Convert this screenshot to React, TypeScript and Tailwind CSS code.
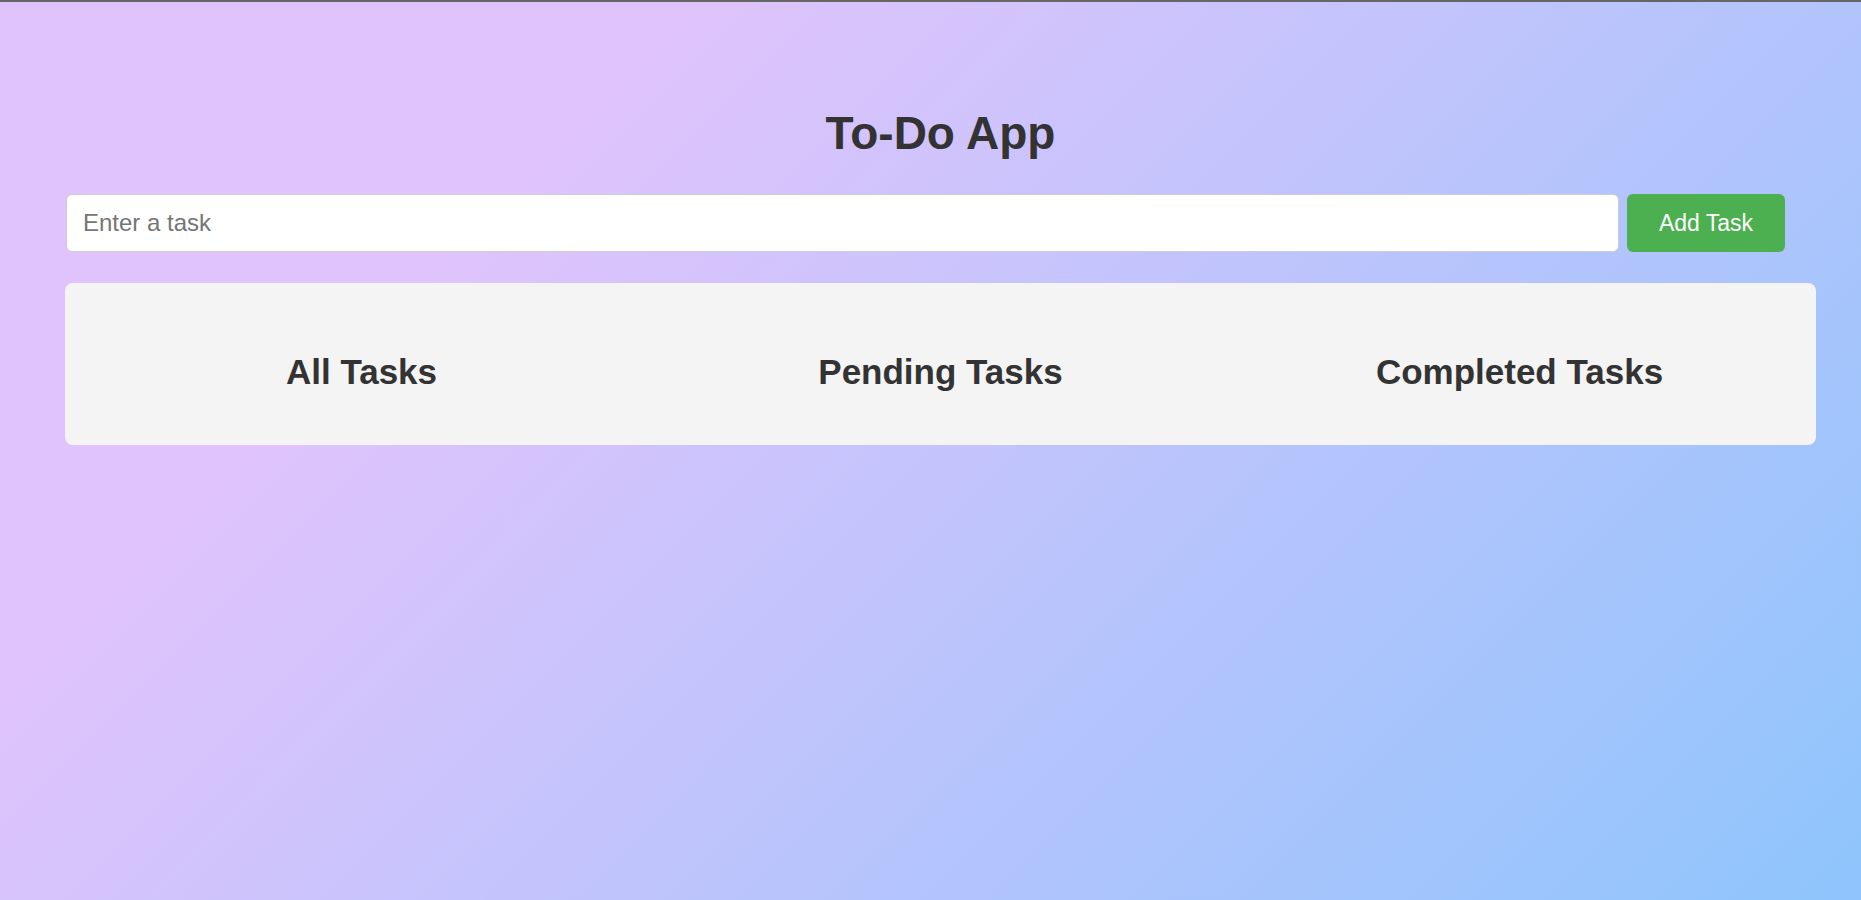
export default function App() {
  return (
    <div className="min-h-screen w-full bg-[linear-gradient(135deg,#e0c3fc_25%,#8ec5fc_100%)] font-['Liberation_Sans',Arial,sans-serif] text-[#333]">
      <div className="h-[2px] w-full bg-[#666]" />
      <div className="ml-[65px] w-[1751px] pt-[105px]">
        <h1 className="text-center text-[46px] font-bold leading-[53px]">To-Do App</h1>

        <div className="mt-[34px] flex items-center gap-[8px]">
          <input
            type="text"
            placeholder="Enter a task"
            className="ml-px h-[58px] w-[1553px] rounded-[6px] border border-[#ccc] bg-white px-[16px] text-[24px] text-[#333] outline-none placeholder:text-[#757575]"
          />
          <button className="h-[58px] w-[158px] rounded-[6px] bg-[#4caf50] text-[23px] text-white">
            Add Task
          </button>
        </div>

        <div className="mt-[31px] grid grid-cols-3 rounded-[8px] bg-[#f4f4f4] px-[7px] pt-[69px] pb-[53px]">
          <h2 className="text-center text-[35px] font-bold leading-[40px]">All Tasks</h2>
          <h2 className="text-center text-[35px] font-bold leading-[40px]">Pending Tasks</h2>
          <h2 className="text-center text-[35px] font-bold leading-[40px]">Completed Tasks</h2>
        </div>
      </div>
    </div>
  );
}
